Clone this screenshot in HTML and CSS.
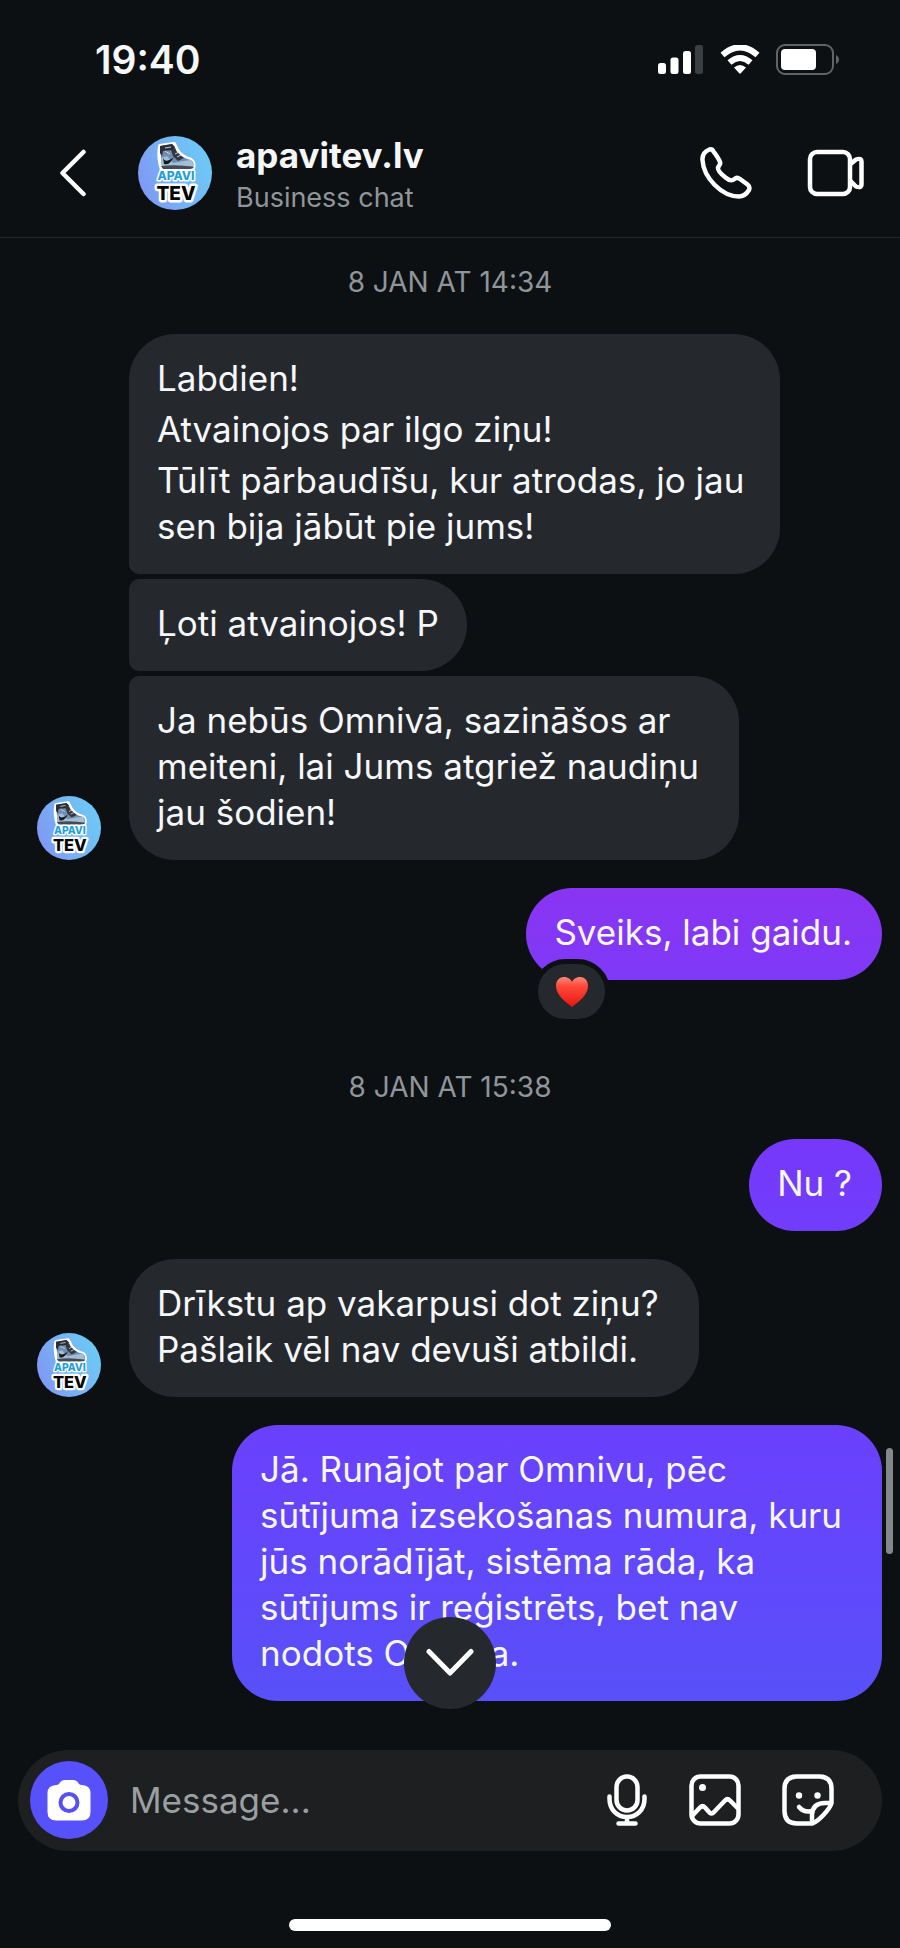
FILE: index.html
```html
<!DOCTYPE html>
<html lang="lv">
<head>
<meta charset="utf-8">
<meta name="viewport" content="width=device-width, initial-scale=1">
<title>apavitev.lv</title>
<link rel="stylesheet" href="styles.css">
</head>
<body>
<svg class="sprite" aria-hidden="true">
  <defs>
    <linearGradient id="avatar-sky" x1="0" y1="0.7" x2="1" y2="0.3">
      <stop offset="0" stop-color="#8097f6"/>
      <stop offset="0.4" stop-color="#78aef3"/>
      <stop offset="1" stop-color="#6ccbf6"/>
    </linearGradient>
    <linearGradient id="heart-red" x1="0" y1="0" x2="0" y2="1">
      <stop offset="0" stop-color="#ff8a78"/>
      <stop offset="0.3" stop-color="#ff4a3c"/>
      <stop offset="1" stop-color="#e8150f"/>
    </linearGradient>
    <symbol id="avatar" viewBox="0 0 74 74">
      <circle cx="37" cy="37" r="37" fill="url(#avatar-sky)"/>
      <path d="M22 10 L36 8 L39 14 Q43 21 53 24 Q57 27 55 33 L53 35 L24 34 Q20 22 22 10Z" fill="#fff" stroke="#fff" stroke-width="4" stroke-linejoin="round"/>
      <path d="M22 10 L34 8 L37 11 L38 15 Q44 22 53 24 Q57 27 55 31 L24 31 Q23 27 23 22Z" fill="#6f8fb2"/>
      <path d="M22 10 L34 8 L37 11 L35 14 L25 15 L24 20 L22 17Z" fill="#2b2d38"/>
      <path d="M33 14 L37 12 L39 16 Q43 20 46 22 L40 25 L35 20Z" fill="#34353f"/>
      <path d="M23 22 L29 20 L35 27 L46 25 L53 24 Q56 27 55 30 L24 30Z" fill="#a3bfd8"/>
      <path d="M25 22 Q27 28 36 21 Q31 30 26 28Z" fill="#171920"/>
      <path d="M23 30 Q39 28 56 31 Q55 33 52 33 L25 33Z" fill="#454a55"/>
      <path d="M27 12 L33 11 M27 15 L32 18 M37 18 L41 16 M39 21 L43 19" stroke="#c9d3de" stroke-width="1" fill="none"/>
      <g class="avatar-word" text-anchor="middle">
        <text class="avatar-word-top" x="38" y="44">APAVI</text>
        <text class="avatar-word-bottom" x="38" y="64">TEV</text>
      </g>
    </symbol>
  </defs>
</svg>

<div class="status">
  <time class="status-time">19:40</time>
  <div class="status-icons">
    <svg width="46" height="30" viewBox="0 0 46 30" aria-label="Signal">
      <rect x="0" y="18" width="8" height="11" rx="2.5" fill="#fff"/>
      <rect x="12.5" y="12.500" width="8" height="16.500" rx="2.500" fill="#fff"/>
      <rect x="25" y="6" width="8" height="23" rx="2.500" fill="#fff"/>
      <rect x="37" y="0" width="8" height="29" rx="2.500" fill="#3c3f41"/>
    </svg>
    <svg width="40" height="30" viewBox="0 0 40 30" aria-label="Wi-Fi">
      <path d="M2.500 10 Q20 -5.500 37.500 10" fill="none" stroke="#fff" stroke-width="6"/>
      <path d="M9.500 17.500 Q20 8.500 30.500 17.500" fill="none" stroke="#fff" stroke-width="6"/>
      <path d="M14 22.500 Q20 17.500 26 22.500 L21 28 Q20 29 19 28Z" fill="#fff"/>
    </svg>
    <svg width="64" height="32" viewBox="0 0 64 32" aria-label="Battery">
      <rect x="1" y="1" width="56" height="29" rx="8" fill="none" stroke="#606466" stroke-width="2"/>
      <rect x="5" y="5" width="35" height="21" rx="4" fill="#fff"/>
      <path d="M60 11 Q63 12.500 63 15.500 Q63 18.500 60 20Z" fill="#606466"/>
    </svg>
  </div>
</div>

<header class="header">
  <button class="icon-button back" aria-label="Back">
    <svg width="28" height="48" viewBox="0 0 28 48"><path d="M24.500 3 L3.500 24 L24.500 45" fill="none" stroke="#fff" stroke-width="4.500" stroke-linecap="round" stroke-linejoin="round"/></svg>
  </button>
  <svg class="avatar-large" role="img" aria-label="apavitev.lv"><use href="#avatar"/></svg>
  <div class="contact">
    <h1 class="contact-name">apavitev.lv</h1>
    <p class="contact-kind">Business chat</p>
  </div>
  <button class="icon-button" aria-label="Call">
    <svg width="52" height="52" viewBox="0 0 52 52"><path d="M9.500 2.500 C4.500 4.500 2 7.500 2.500 13 C3.500 31 22 49.500 39 49.500 C44 49.500 46.500 47 49 43 C50 40.500 49.500 39 47.500 37.500 L40 32 C38 30.500 36 30.500 34.500 32 C31.500 34.500 29 33.500 25.500 30.500 C21 27 17.500 23 18 20.500 C18.500 18.500 21 18 20 15 C19 12 16 8 13.500 4.500 C12.500 2.500 11 2 9.500 2.500Z" fill="none" stroke="#fff" stroke-width="4.500" stroke-linejoin="round"/></svg>
  </button>
  <button class="icon-button" aria-label="Video call">
    <svg width="58" height="48" viewBox="0 0 58 48"><rect x="3" y="3" width="40" height="42" rx="7" fill="none" stroke="#fff" stroke-width="4.500"/><path d="M43.500 15 L49 10.500 Q54.500 8.500 54.500 13 V35 Q54.500 39.500 49 37.500 L43.500 32" fill="none" stroke="#fff" stroke-width="4.500" stroke-linejoin="round"/></svg>
  </button>
</header>

<main class="chat">
  <time class="date">8 JAN AT 14:34</time>

  <section class="row received">
    <svg class="avatar-small" aria-hidden="true"><use href="#avatar"/></svg>
    <div class="stack">
      <div class="bubble wrapped first">
        <p>Labdien!</p>
        <p>Atvainojos par ilgo ziņu!</p>
        <p>Tūlīt pārbaudīšu, kur atrodas, jo jau<br>sen bija jābūt pie jums!</p>
      </div>
      <div class="bubble middle"><p>Ļoti atvainojos! P</p></div>
      <div class="bubble wrapped last"><p>Ja nebūs Omnivā, sazināšos ar<br>meiteni, lai Jums atgriež naudiņu<br>jau šodien!</p></div>
    </div>
  </section>

  <section class="row sent">
    <div class="bubble violet">
      <p>Sveiks, labi gaidu.</p>
      <button class="reaction" aria-label="Heart reaction">
        <svg width="34" height="32" viewBox="0 0 34 32"><path d="M17 31 C11 26 1 19.500 1 10 C1 4 5 1 9 1 C13 1 16 3.500 17 6 C18 3.500 21 1 25 1 C29 1 33 4 33 10 C33 19.500 23 26 17 31Z" fill="url(#heart-red)"/></svg>
      </button>
    </div>
  </section>

  <time class="date later">8 JAN AT 15:38</time>

  <section class="row sent">
    <div class="bubble indigo"><p>Nu ?</p></div>
  </section>

  <section class="row received">
    <svg class="avatar-small" aria-hidden="true"><use href="#avatar"/></svg>
    <div class="stack">
      <div class="bubble wrapped"><p>Drīkstu ap vakarpusi dot ziņu?<br>Pašlaik vēl nav devuši atbildi.</p></div>
    </div>
  </section>

  <section class="row sent">
    <div class="bubble wrapped blue"><p>Jā. Runājot par Omnivu, pēc<br>sūtījuma izsekošanas numura, kuru<br>jūs norādījāt, sistēma rāda, ka<br>sūtījums ir reģistrēts, bet nav<br>nodots Omniva.</p></div>
  </section>

  <div class="scroll-thumb"></div>
  <button class="scroll-down" aria-label="Scroll to latest">
    <svg width="50" height="30" viewBox="0 0 50 30"><path d="M4 3.500 L25 25 L46 3.500" fill="none" stroke="#fff" stroke-width="5" stroke-linecap="round" stroke-linejoin="round"/></svg>
  </button>
</main>

<form class="composer">
  <button class="camera" type="button" aria-label="Camera">
    <svg width="44" height="42" viewBox="0 0 44 42"><path d="M12 5 Q14 1 18 1 H26 Q30 1 32 5 Q33 6 35 6 Q43.500 6.500 43.500 14 V33 Q43.500 41.500 35 41.500 H9 Q0.500 41.500 0.500 33 V14 Q0.500 6.500 9 6 Q11 6 12 5Z" fill="#fff"/><circle cx="22" cy="23.500" r="8.500" fill="#fff" stroke="#5750f0" stroke-width="4"/></svg>
  </button>
  <input class="message" type="text" placeholder="Message..." aria-label="Message">
  <div class="tools">
    <button class="icon-button" type="button" aria-label="Voice message">
      <svg width="42" height="52" viewBox="0 0 42 52" fill="none" stroke="#fff" stroke-width="4.500" stroke-linecap="round"><rect x="10.500" y="2.500" width="21" height="34" rx="10.500"/><path d="M3.500 22.500 V25 C3.500 36 11.500 43 21 43 C30.500 43 38.500 36 38.500 25 V22.500 M21 43 V49 M12.500 49.500 H29.500"/></svg>
    </button>
    <button class="icon-button" type="button" aria-label="Photo">
      <svg width="52" height="52" viewBox="0 0 52 52" fill="none" stroke="#fff" stroke-width="4.500" stroke-linejoin="round"><rect x="2.500" y="2.500" width="47" height="47" rx="9"/><path d="M3.500 41.500 L11 33.500 Q13.500 31 16 33.500 L20 38 Q22.500 41 25 38 L36 26.500 Q38.500 24 41 26.500 L49 34.500"/><circle cx="13.500" cy="13.500" r="3.500" fill="#fff" stroke="none"/></svg>
    </button>
    <button class="icon-button" type="button" aria-label="Sticker">
      <svg width="52" height="52" viewBox="0 0 52 52" fill="none" stroke="#fff" stroke-width="4.500" stroke-linecap="round" stroke-linejoin="round"><path d="M30.500 49.500 H15 Q2.500 49.500 2.500 37 V15 Q2.500 2.500 15 2.500 H37 Q49.500 2.500 49.500 15 V29 C48 35 37 47 30.500 49.500Z"/><path d="M30 48.500 V41 Q30.500 29 43 29 H49"/><path d="M17 33 Q22 39 30 37"/><circle cx="17" cy="21.500" r="3.200" fill="#fff" stroke="none"/><circle cx="35.500" cy="21.500" r="3.200" fill="#fff" stroke="none"/></svg>
    </button>
  </div>
</form>
<div class="home-indicator"></div>
</body>
</html>
```
FILE: styles.css
```css
* {
  box-sizing: border-box;
}

body {
  margin: 0;
  min-height: 100vh;
  display: flex;
  flex-direction: column;
  background: #0c1013;
  color: #f5f7f9;
  font-family: Inter, "Noto Sans", sans-serif;
}

h1,
p {
  margin: 0;
}

svg {
  display: block;
  flex: none;
}

button {
  border: 0;
  padding: 0;
  background: none;
  color: inherit;
  font: inherit;
}

.sprite {
  position: absolute;
  width: 0;
  height: 0;
}

.status {
  display: flex;
  justify-content: space-between;
  align-items: center;
  padding: 36px 60px 24px 95px;
}

.status-time {
  font-size: 39px;
  line-height: 48px;
  font-weight: 600;
}

.status-icons {
  display: flex;
  align-items: center;
  gap: 16px;
}

.header {
  display: flex;
  align-items: center;
  height: 130px;
  padding: 0 35px 0 59px;
  border-bottom: 1px solid #25292c;
}

.icon-button {
  display: flex;
  flex: none;
}

.back {
  margin-right: 51px;
}

.avatar-large {
  width: 74px;
  height: 74px;
}

.avatar-word {
  font-family: Inter, sans-serif;
  font-weight: 800;
  stroke: #fff;
  stroke-linejoin: round;
  paint-order: stroke;
}

.avatar-word-top {
  font-size: 12px;
  fill: #1f9fdc;
  stroke-width: 3px;
}

.avatar-word-bottom {
  font-size: 19px;
  fill: #050505;
  stroke-width: 5px;
}

.contact {
  flex: 1;
  padding-top: 8px;
  margin-left: 24px;
}

.contact-name {
  font-size: 35px;
  line-height: 42px;
  font-weight: 700;
}

.contact-kind {
  font-size: 27px;
  line-height: 44px;
  color: #90959a;
}

.header .icon-button + .icon-button {
  margin-left: 55px;
}

.chat {
  position: relative;
  flex: 1;
  display: flex;
  flex-direction: column;
  gap: 28px;
  padding: 26px 18px 48px 37px;
}

.date {
  align-self: center;
  margin-right: 19px;
  margin-bottom: 6px;
  font-size: 28px;
  line-height: 36px;
  color: #90959a;
}

.later {
  margin-top: 61px;
}

.row {
  display: flex;
  align-items: flex-end;
}

.received {
  gap: 28px;
}

.sent {
  justify-content: flex-end;
}

.avatar-small {
  width: 64px;
  height: 64px;
}

.stack {
  display: flex;
  flex-direction: column;
  align-items: flex-start;
  gap: 5px;
}

.bubble {
  position: relative;
  padding: 21px 28px 25px;
  border-radius: 46px;
  background: #25292e;
  font-size: 35px;
  line-height: 46px;
}

.bubble p + p {
  margin-top: 5px;
}

.sent .bubble {
  padding-right: 30px;
}

.row .wrapped {
  padding-right: 40px;
}

.row .first {
  padding-right: 36px;
  border-bottom-left-radius: 10px;
}

.middle {
  border-top-left-radius: 10px;
  border-bottom-left-radius: 10px;
}

.last {
  border-top-left-radius: 10px;
}

.violet {
  background: linear-gradient(#8935f2, #7f39f8);
}

.indigo {
  background: linear-gradient(#7638fa, #713dfc);
}

.blue {
  background: linear-gradient(#6b40fd, #5850f9);
}

.reaction {
  position: absolute;
  left: 7px;
  bottom: -44px;
  display: flex;
  align-items: center;
  justify-content: center;
  width: 77px;
  height: 65px;
  border: 5px solid #0c1013;
  border-radius: 33px;
  background: #25292e;
}

.scroll-thumb {
  position: absolute;
  right: 7px;
  bottom: 196px;
  width: 7px;
  height: 106px;
  border-radius: 4px;
  background: #85888a;
}

.scroll-down {
  position: absolute;
  left: 50%;
  bottom: 41px;
  display: flex;
  align-items: center;
  justify-content: center;
  width: 92px;
  height: 92px;
  margin-left: -46px;
  border-radius: 50%;
  background: #25292e;
}

.composer {
  display: flex;
  align-items: center;
  margin: 0 18px;
  padding: 11px 48px 12px 12px;
  border-radius: 51px;
  background: #1d1f21;
}

.camera {
  display: flex;
  flex: none;
  align-items: center;
  justify-content: center;
  width: 78px;
  height: 78px;
  border-radius: 50%;
  background: #5751fb;
}

.message {
  flex: 1;
  min-width: 0;
  margin-left: 22px;
  padding: 0;
  border: 0;
  outline: 0;
  background: none;
  color: inherit;
  font: 35px/46px Inter, "Noto Sans", sans-serif;
}

.message::placeholder {
  color: #9a9fa2;
  opacity: 1;
}

.tools {
  display: flex;
  gap: 41px;
}

.home-indicator {
  align-self: center;
  width: 322px;
  height: 12px;
  margin: 68px 0 17px;
  border-radius: 6px;
  background: #fff;
}
```
